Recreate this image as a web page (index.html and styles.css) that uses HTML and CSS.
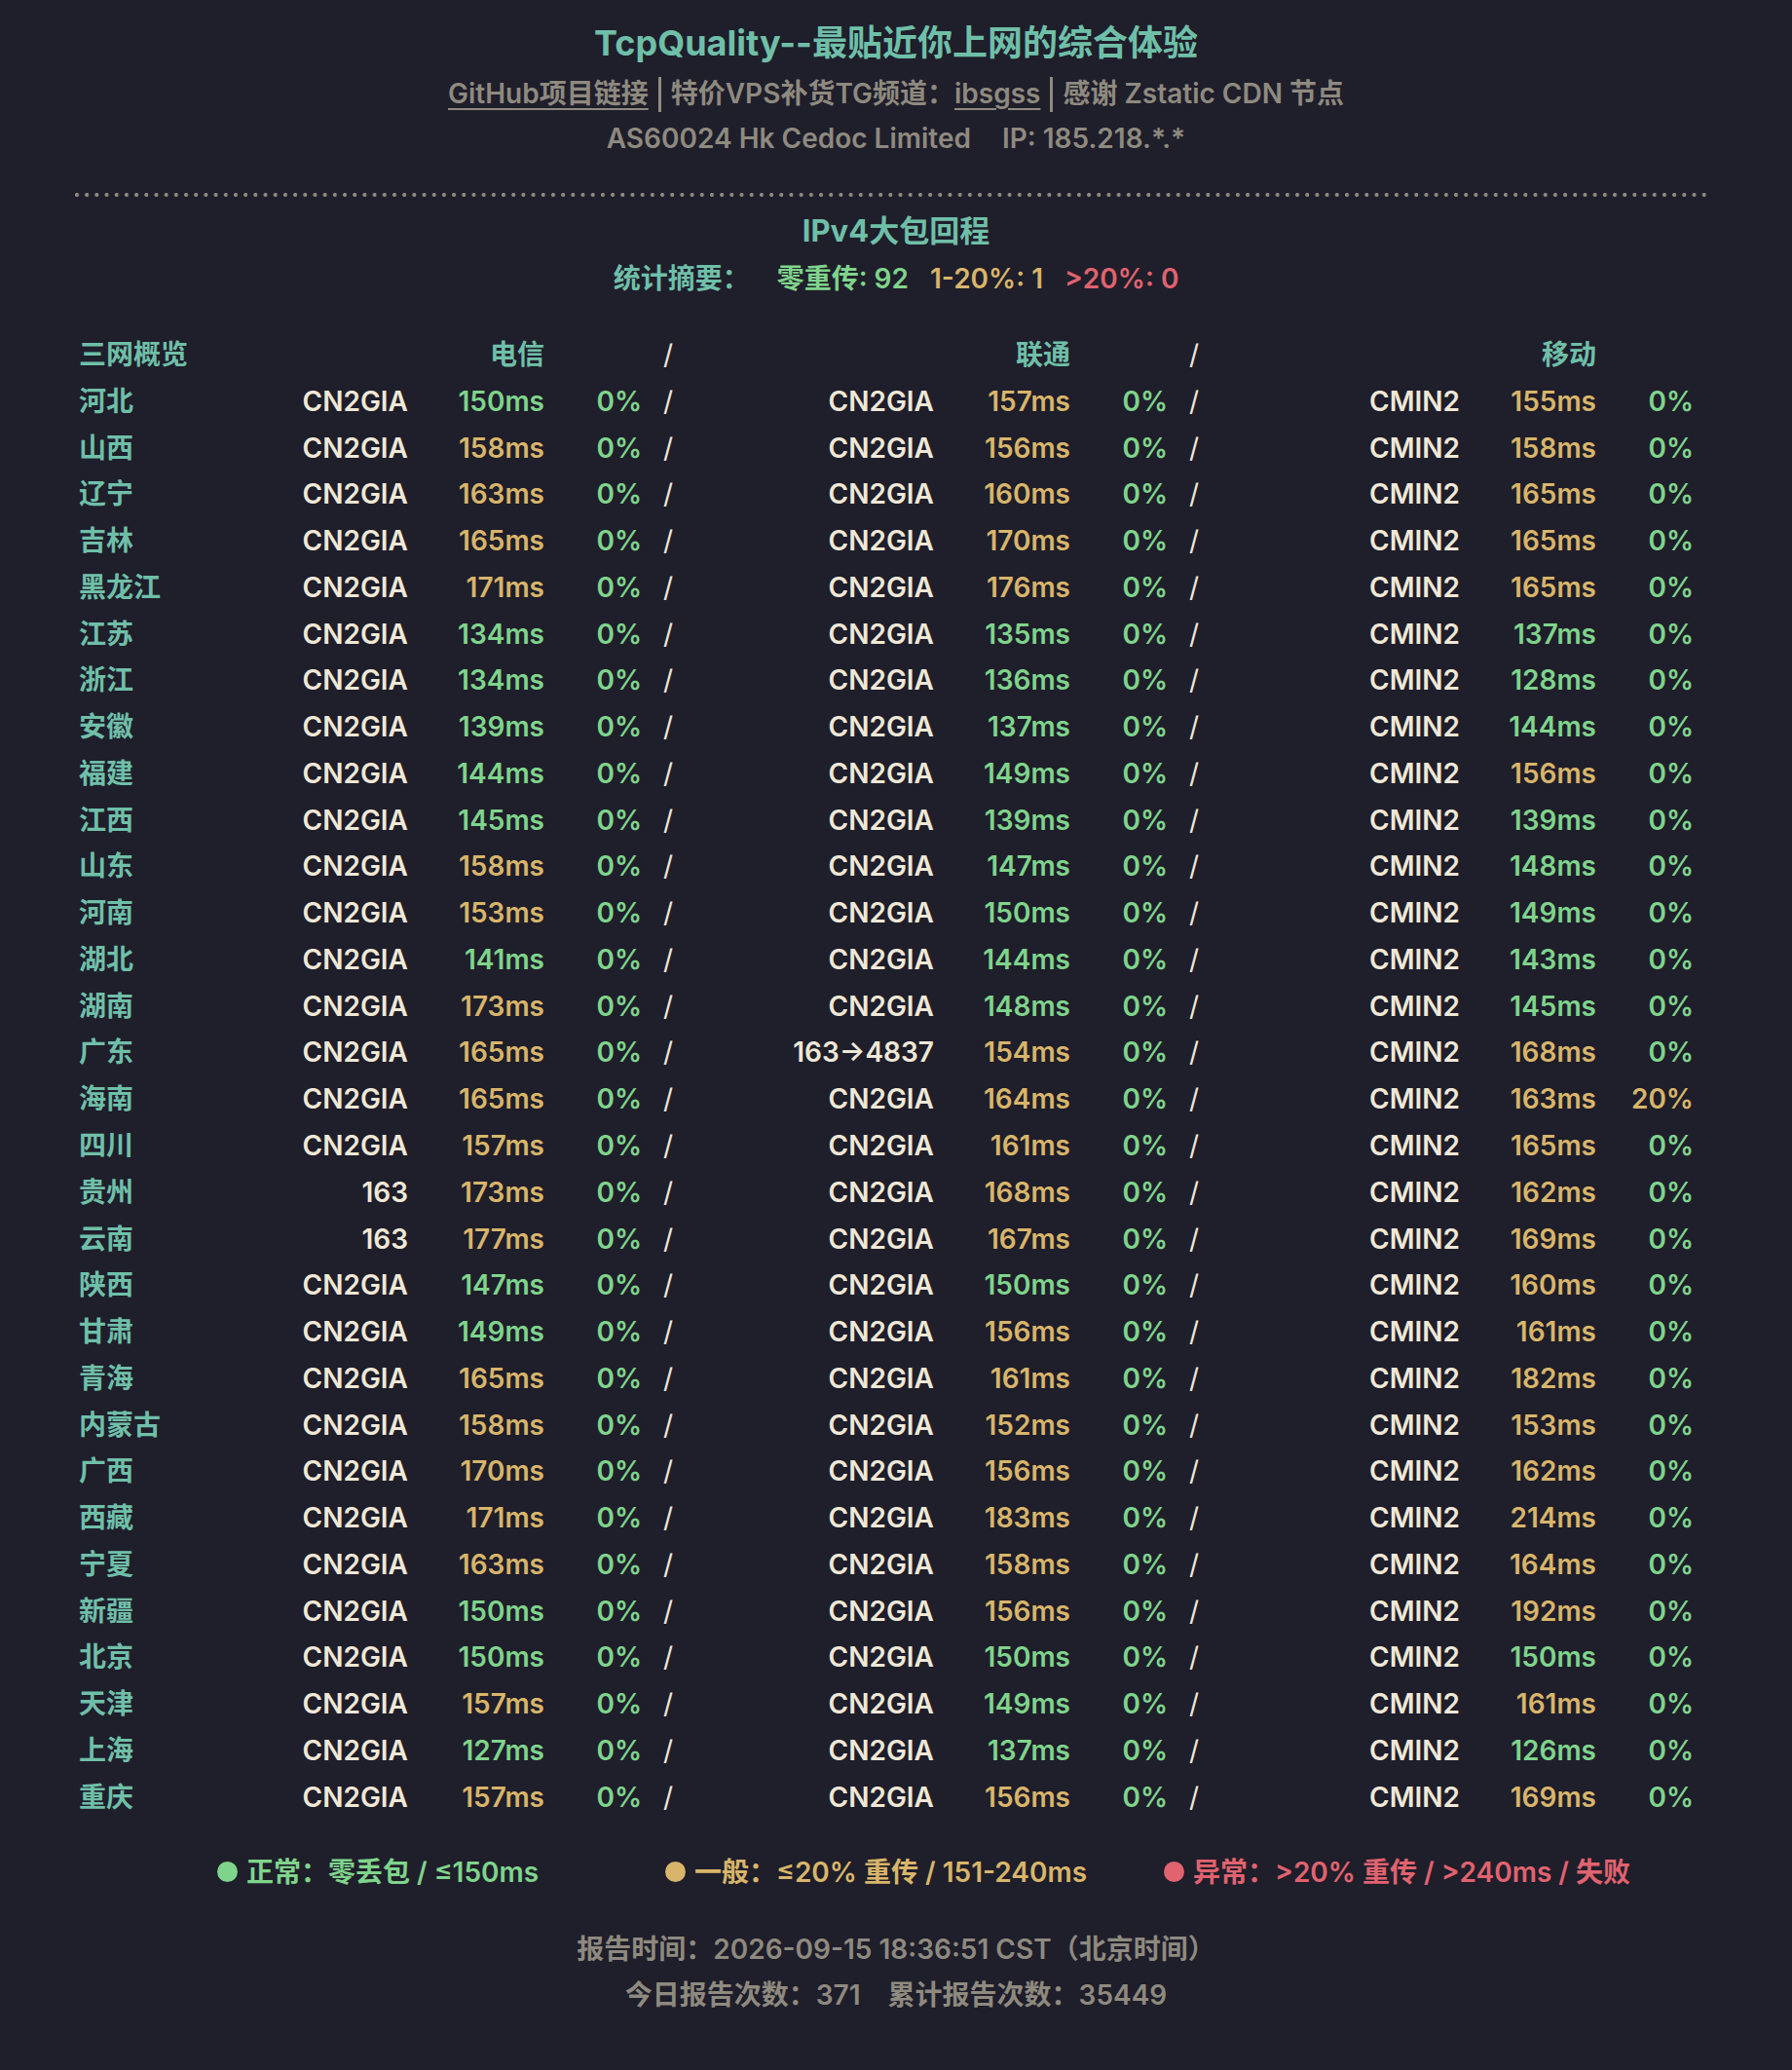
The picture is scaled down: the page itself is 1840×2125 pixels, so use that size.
FILE: index.html
```html
<!DOCTYPE html>
<html lang="zh-CN">
<head>
<meta charset="utf-8">
<title>TcpQuality</title>
<link rel="stylesheet" href="styles.css">
</head>
<body>
<div class="page">
  <header class="head">
    <h1 class="title">TcpQuality--最贴近你上网的综合体验</h1>
    <div class="links"><a class="ul">GitHub项目链接</a><span class="bar"></span>特价VPS补货TG频道：<a class="ul">ibsgss</a><span class="bar"></span>感谢 Zstatic CDN 节点</div>
    <div class="asn">AS60024 Hk Cedoc Limited<span class="sp"></span>IP: 185.218.*.*</div>
  </header>
  <div class="dots"></div>
  <h2 class="sect">IPv4大包回程</h2>
  <div class="summary"><span class="tl">统计摘要：</span><span class="g">零重传: 92</span><span class="y">1-20%: 1</span><span class="r">&gt;20%: 0</span></div>

  <div class="grid">
    <div class="row hdr"><span class="n">三网概览</span><span></span><span class="h">电信</span><span></span><span class="s">/</span><span></span><span class="h">联通</span><span></span><span class="s">/</span><span></span><span class="h">移动</span><span></span></div>
    <div class="row"><span class="n">河北</span><span class="t">CN2GIA</span><span class="g">150ms</span><span class="g">0%</span><span class="s">/</span><span class="t">CN2GIA</span><span class="y">157ms</span><span class="g">0%</span><span class="s">/</span><span class="t">CMIN2</span><span class="y">155ms</span><span class="g">0%</span></div>
    <div class="row"><span class="n">山西</span><span class="t">CN2GIA</span><span class="y">158ms</span><span class="g">0%</span><span class="s">/</span><span class="t">CN2GIA</span><span class="y">156ms</span><span class="g">0%</span><span class="s">/</span><span class="t">CMIN2</span><span class="y">158ms</span><span class="g">0%</span></div>
    <div class="row"><span class="n">辽宁</span><span class="t">CN2GIA</span><span class="y">163ms</span><span class="g">0%</span><span class="s">/</span><span class="t">CN2GIA</span><span class="y">160ms</span><span class="g">0%</span><span class="s">/</span><span class="t">CMIN2</span><span class="y">165ms</span><span class="g">0%</span></div>
    <div class="row"><span class="n">吉林</span><span class="t">CN2GIA</span><span class="y">165ms</span><span class="g">0%</span><span class="s">/</span><span class="t">CN2GIA</span><span class="y">170ms</span><span class="g">0%</span><span class="s">/</span><span class="t">CMIN2</span><span class="y">165ms</span><span class="g">0%</span></div>
    <div class="row"><span class="n">黑龙江</span><span class="t">CN2GIA</span><span class="y">171ms</span><span class="g">0%</span><span class="s">/</span><span class="t">CN2GIA</span><span class="y">176ms</span><span class="g">0%</span><span class="s">/</span><span class="t">CMIN2</span><span class="y">165ms</span><span class="g">0%</span></div>
    <div class="row"><span class="n">江苏</span><span class="t">CN2GIA</span><span class="g">134ms</span><span class="g">0%</span><span class="s">/</span><span class="t">CN2GIA</span><span class="g">135ms</span><span class="g">0%</span><span class="s">/</span><span class="t">CMIN2</span><span class="g">137ms</span><span class="g">0%</span></div>
    <div class="row"><span class="n">浙江</span><span class="t">CN2GIA</span><span class="g">134ms</span><span class="g">0%</span><span class="s">/</span><span class="t">CN2GIA</span><span class="g">136ms</span><span class="g">0%</span><span class="s">/</span><span class="t">CMIN2</span><span class="g">128ms</span><span class="g">0%</span></div>
    <div class="row"><span class="n">安徽</span><span class="t">CN2GIA</span><span class="g">139ms</span><span class="g">0%</span><span class="s">/</span><span class="t">CN2GIA</span><span class="g">137ms</span><span class="g">0%</span><span class="s">/</span><span class="t">CMIN2</span><span class="g">144ms</span><span class="g">0%</span></div>
    <div class="row"><span class="n">福建</span><span class="t">CN2GIA</span><span class="g">144ms</span><span class="g">0%</span><span class="s">/</span><span class="t">CN2GIA</span><span class="g">149ms</span><span class="g">0%</span><span class="s">/</span><span class="t">CMIN2</span><span class="y">156ms</span><span class="g">0%</span></div>
    <div class="row"><span class="n">江西</span><span class="t">CN2GIA</span><span class="g">145ms</span><span class="g">0%</span><span class="s">/</span><span class="t">CN2GIA</span><span class="g">139ms</span><span class="g">0%</span><span class="s">/</span><span class="t">CMIN2</span><span class="g">139ms</span><span class="g">0%</span></div>
    <div class="row"><span class="n">山东</span><span class="t">CN2GIA</span><span class="y">158ms</span><span class="g">0%</span><span class="s">/</span><span class="t">CN2GIA</span><span class="g">147ms</span><span class="g">0%</span><span class="s">/</span><span class="t">CMIN2</span><span class="g">148ms</span><span class="g">0%</span></div>
    <div class="row"><span class="n">河南</span><span class="t">CN2GIA</span><span class="y">153ms</span><span class="g">0%</span><span class="s">/</span><span class="t">CN2GIA</span><span class="g">150ms</span><span class="g">0%</span><span class="s">/</span><span class="t">CMIN2</span><span class="g">149ms</span><span class="g">0%</span></div>
    <div class="row"><span class="n">湖北</span><span class="t">CN2GIA</span><span class="g">141ms</span><span class="g">0%</span><span class="s">/</span><span class="t">CN2GIA</span><span class="g">144ms</span><span class="g">0%</span><span class="s">/</span><span class="t">CMIN2</span><span class="g">143ms</span><span class="g">0%</span></div>
    <div class="row"><span class="n">湖南</span><span class="t">CN2GIA</span><span class="y">173ms</span><span class="g">0%</span><span class="s">/</span><span class="t">CN2GIA</span><span class="g">148ms</span><span class="g">0%</span><span class="s">/</span><span class="t">CMIN2</span><span class="g">145ms</span><span class="g">0%</span></div>
    <div class="row"><span class="n">广东</span><span class="t">CN2GIA</span><span class="y">165ms</span><span class="g">0%</span><span class="s">/</span><span class="t">163→4837</span><span class="y">154ms</span><span class="g">0%</span><span class="s">/</span><span class="t">CMIN2</span><span class="y">168ms</span><span class="g">0%</span></div>
    <div class="row"><span class="n">海南</span><span class="t">CN2GIA</span><span class="y">165ms</span><span class="g">0%</span><span class="s">/</span><span class="t">CN2GIA</span><span class="y">164ms</span><span class="g">0%</span><span class="s">/</span><span class="t">CMIN2</span><span class="y">163ms</span><span class="y">20%</span></div>
    <div class="row"><span class="n">四川</span><span class="t">CN2GIA</span><span class="y">157ms</span><span class="g">0%</span><span class="s">/</span><span class="t">CN2GIA</span><span class="y">161ms</span><span class="g">0%</span><span class="s">/</span><span class="t">CMIN2</span><span class="y">165ms</span><span class="g">0%</span></div>
    <div class="row"><span class="n">贵州</span><span class="t">163</span><span class="y">173ms</span><span class="g">0%</span><span class="s">/</span><span class="t">CN2GIA</span><span class="y">168ms</span><span class="g">0%</span><span class="s">/</span><span class="t">CMIN2</span><span class="y">162ms</span><span class="g">0%</span></div>
    <div class="row"><span class="n">云南</span><span class="t">163</span><span class="y">177ms</span><span class="g">0%</span><span class="s">/</span><span class="t">CN2GIA</span><span class="y">167ms</span><span class="g">0%</span><span class="s">/</span><span class="t">CMIN2</span><span class="y">169ms</span><span class="g">0%</span></div>
    <div class="row"><span class="n">陕西</span><span class="t">CN2GIA</span><span class="g">147ms</span><span class="g">0%</span><span class="s">/</span><span class="t">CN2GIA</span><span class="g">150ms</span><span class="g">0%</span><span class="s">/</span><span class="t">CMIN2</span><span class="y">160ms</span><span class="g">0%</span></div>
    <div class="row"><span class="n">甘肃</span><span class="t">CN2GIA</span><span class="g">149ms</span><span class="g">0%</span><span class="s">/</span><span class="t">CN2GIA</span><span class="y">156ms</span><span class="g">0%</span><span class="s">/</span><span class="t">CMIN2</span><span class="y">161ms</span><span class="g">0%</span></div>
    <div class="row"><span class="n">青海</span><span class="t">CN2GIA</span><span class="y">165ms</span><span class="g">0%</span><span class="s">/</span><span class="t">CN2GIA</span><span class="y">161ms</span><span class="g">0%</span><span class="s">/</span><span class="t">CMIN2</span><span class="y">182ms</span><span class="g">0%</span></div>
    <div class="row"><span class="n">内蒙古</span><span class="t">CN2GIA</span><span class="y">158ms</span><span class="g">0%</span><span class="s">/</span><span class="t">CN2GIA</span><span class="y">152ms</span><span class="g">0%</span><span class="s">/</span><span class="t">CMIN2</span><span class="y">153ms</span><span class="g">0%</span></div>
    <div class="row"><span class="n">广西</span><span class="t">CN2GIA</span><span class="y">170ms</span><span class="g">0%</span><span class="s">/</span><span class="t">CN2GIA</span><span class="y">156ms</span><span class="g">0%</span><span class="s">/</span><span class="t">CMIN2</span><span class="y">162ms</span><span class="g">0%</span></div>
    <div class="row"><span class="n">西藏</span><span class="t">CN2GIA</span><span class="y">171ms</span><span class="g">0%</span><span class="s">/</span><span class="t">CN2GIA</span><span class="y">183ms</span><span class="g">0%</span><span class="s">/</span><span class="t">CMIN2</span><span class="y">214ms</span><span class="g">0%</span></div>
    <div class="row"><span class="n">宁夏</span><span class="t">CN2GIA</span><span class="y">163ms</span><span class="g">0%</span><span class="s">/</span><span class="t">CN2GIA</span><span class="y">158ms</span><span class="g">0%</span><span class="s">/</span><span class="t">CMIN2</span><span class="y">164ms</span><span class="g">0%</span></div>
    <div class="row"><span class="n">新疆</span><span class="t">CN2GIA</span><span class="g">150ms</span><span class="g">0%</span><span class="s">/</span><span class="t">CN2GIA</span><span class="y">156ms</span><span class="g">0%</span><span class="s">/</span><span class="t">CMIN2</span><span class="y">192ms</span><span class="g">0%</span></div>
    <div class="row"><span class="n">北京</span><span class="t">CN2GIA</span><span class="g">150ms</span><span class="g">0%</span><span class="s">/</span><span class="t">CN2GIA</span><span class="g">150ms</span><span class="g">0%</span><span class="s">/</span><span class="t">CMIN2</span><span class="g">150ms</span><span class="g">0%</span></div>
    <div class="row"><span class="n">天津</span><span class="t">CN2GIA</span><span class="y">157ms</span><span class="g">0%</span><span class="s">/</span><span class="t">CN2GIA</span><span class="g">149ms</span><span class="g">0%</span><span class="s">/</span><span class="t">CMIN2</span><span class="y">161ms</span><span class="g">0%</span></div>
    <div class="row"><span class="n">上海</span><span class="t">CN2GIA</span><span class="g">127ms</span><span class="g">0%</span><span class="s">/</span><span class="t">CN2GIA</span><span class="g">137ms</span><span class="g">0%</span><span class="s">/</span><span class="t">CMIN2</span><span class="g">126ms</span><span class="g">0%</span></div>
    <div class="row"><span class="n">重庆</span><span class="t">CN2GIA</span><span class="y">157ms</span><span class="g">0%</span><span class="s">/</span><span class="t">CN2GIA</span><span class="y">156ms</span><span class="g">0%</span><span class="s">/</span><span class="t">CMIN2</span><span class="y">169ms</span><span class="g">0%</span></div>
  </div>

  <div class="legend">
    <span class="item g i1"><i class="dot"></i>正常：零丢包 / ≤150ms</span>
    <span class="item y i2"><i class="dot"></i>一般：≤20% 重传 / 151-240ms</span>
    <span class="item r"><i class="dot"></i>异常：&gt;20% 重传 / &gt;240ms / 失败</span>
  </div>

  <footer class="foot">
    <div>报告时间：2026-09-15 18:36:51 CST（北京时间）</div>
    <div>今日报告次数：371<span class="sp2"></span>累计报告次数：35449</div>
  </footer>
</div>
</body>
</html>
```

FILE: styles.css
```css
* { box-sizing: border-box; }
html, body {
  margin: 0;
  padding: 0;
  background: #1f1e2b;
}
body {
  font-family: "Inter", "Noto Sans CJK SC", sans-serif;
  font-weight: 600;
  color: #8e8a7f;
}
.page {
  width: 1840px;
  height: 2125px;
  padding: 0 78px;
  overflow: hidden;
}
.head {
  text-align: center;
  padding-top: 20px;
}
.title {
  margin: 0;
  font-size: 36px;
  line-height: 48px;
  font-weight: 700;
  color: #6fbfa8;
}
.links {
  margin-top: 8px;
  font-size: 28px;
  line-height: 40px;
  color: #8e8a7f;
}
.ul {
  text-decoration: underline;
  text-decoration-thickness: 2px;
  text-underline-offset: 5px;
}
.bar {
  display: inline-block;
  width: 3px;
  height: 36px;
  background: #8e8a7f;
  vertical-align: -9px;
  margin: 0 10px;
}
.asn {
  margin-top: 6px;
  font-size: 28px;
  line-height: 40px;
}
.sp { display: inline-block; width: 32px; }
.dots {
  margin: 36px 7px 0 -1px;
  height: 4px;
  background-image: radial-gradient(circle at 2px 2px, #8e8a7f 1.8px, transparent 2.3px);
  background-size: 10.2px 4px;
  background-repeat: repeat-x;
}
.sect {
  margin: 13px 0 0;
  text-align: center;
  font-size: 31px;
  line-height: 44px;
  font-weight: 700;
  color: #6fbfa8;
}
.summary {
  margin-top: 7px;
  text-align: center;
  font-size: 28px;
  line-height: 40px;
  display: flex;
  justify-content: center;
  gap: 22px;
}
.summary .tl { color: #6fbfa8; margin-right: 6px; }

.g { color: #7fd48b; }
.y { color: #d8b56a; }
.r { color: #e0636f; }

.grid {
  margin-top: 35px;
  font-size: 28px;
}
.row {
  display: grid;
  grid-template-columns: 222px 119px 140px 100px 61px 239px 140px 100px 61px 239px 140px 100px;
  line-height: 47.77px;
  height: 47.77px;
  white-space: nowrap;
}
.row > span { text-align: right; }
.row > .n {
  text-align: left;
  padding-left: 3px;
  color: #6fbfa8;
}
.row > .h { color: #6fbfa8; }
.row > .t { color: #efe8d6; }
.row > .s {
  text-align: left;
  padding-left: 22px;
  color: #efe8d6;
  font-weight: 400;
}

.legend {
  margin-top: 32px;
  padding-left: 145px;
  display: flex;
  font-size: 28px;
  line-height: 40px;
}
.item { display: flex; align-items: center; white-space: nowrap; }
.i1 { margin-right: 130px; }
.i2 { margin-right: 79px; }
.dot {
  display: inline-block;
  width: 21px;
  height: 21px;
  border-radius: 50%;
  background: currentColor;
  margin-right: 9px;
}
.foot {
  margin-top: 36px;
  text-align: center;
  font-size: 28px;
  line-height: 47px;
  color: #8e8a7f;
}
.sp2 { display: inline-block; width: 28px; }
```
